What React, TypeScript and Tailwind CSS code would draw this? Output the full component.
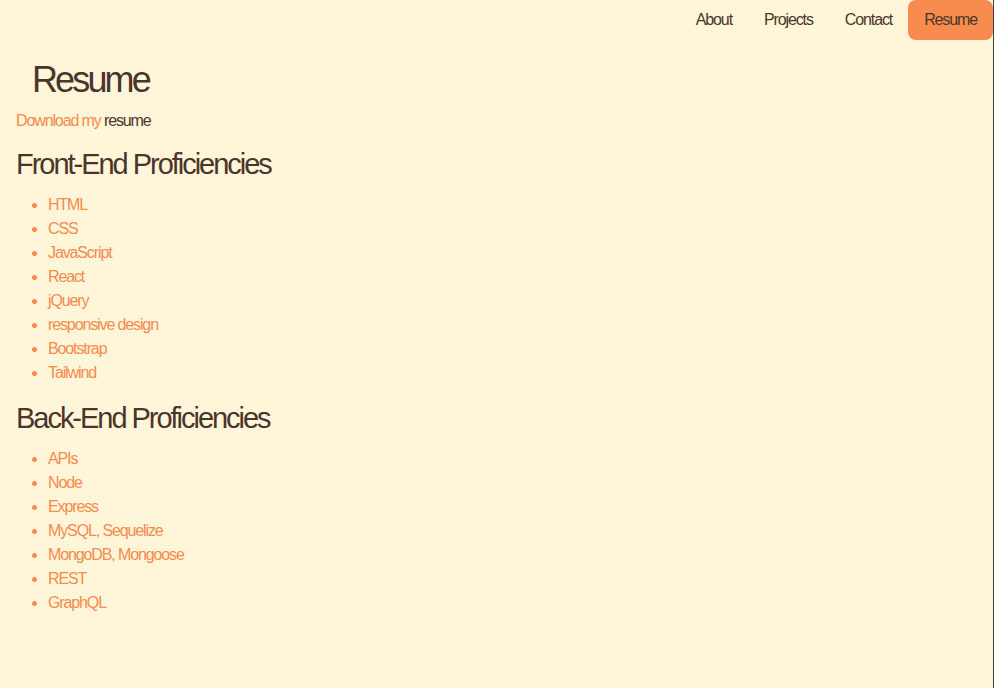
const frontEnd = [
  "HTML",
  "CSS",
  "JavaScript",
  "React",
  "jQuery",
  "responsive design",
  "Bootstrap",
  "Tailwind",
];

const backEnd = [
  "APIs",
  "Node",
  "Express",
  "MySQL, Sequelize",
  "MongoDB, Mongoose",
  "REST",
  "GraphQL",
];

const navLinks = ["About", "Projects", "Contact"];

const SkillList = ({ items }: { items: string[] }) => (
  <ul className="list-disc pl-8 marker:text-[#f58b4c]">
    {items.map((item) => (
      <li key={item} className="text-[16px] leading-[24px] text-[#f58b4c] tracking-[-0.07em]">
        {item}
      </li>
    ))}
  </ul>
);

export default function App() {
  return (
    <div className="min-h-[688px] w-full bg-[#fff6da] border-r border-[#3b3b3b] text-[#4b352b] font-['Liberation_Sans',Arial,sans-serif]">
      {/* Nav */}
      <nav className="flex justify-end h-10">
        {navLinks.map((link) => (
          <a key={link} className="px-4 flex items-center text-[16px] tracking-[-0.07em]">
            {link}
          </a>
        ))}
        <a className="px-4 flex items-center text-[16px] tracking-[-0.07em] bg-[#f88c4e] rounded-lg">
          Resume
        </a>
      </nav>

      <main className="px-4">
        <h1 className="pl-4 text-[36px] leading-[44px] mt-[18px] tracking-[-0.08em]">Resume</h1>
        <p className="text-[16px] leading-[24px] mt-[7px] tracking-[-0.07em]">
          <a className="text-[#f58b4c]">Download my</a> resume
        </p>

        <h2 className="text-[29px] leading-[36px] mt-[13px] tracking-[-0.07em]">Front-End Proficiencies</h2>
        <div className="mt-[11px]">
          <SkillList items={frontEnd} />
        </div>

        <h2 className="text-[29px] leading-[36px] mt-[15px] tracking-[-0.07em]">Back-End Proficiencies</h2>
        <div className="mt-[11px]">
          <SkillList items={backEnd} />
        </div>
      </main>
    </div>
  );
}
